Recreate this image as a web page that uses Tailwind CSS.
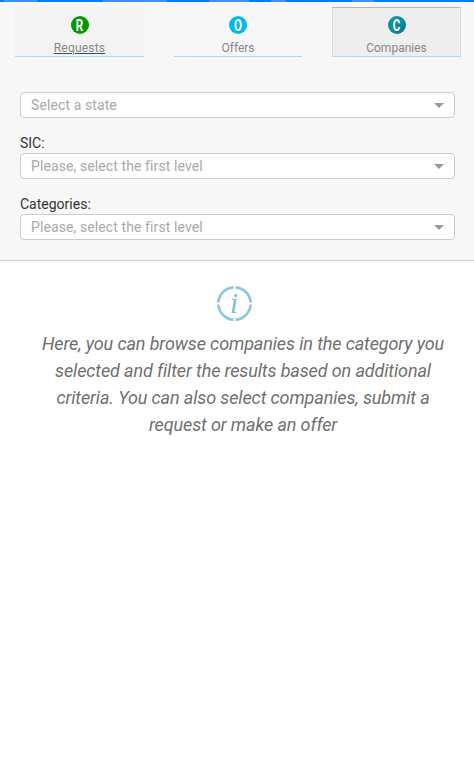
<!DOCTYPE html>
<html lang="en">
<head>
    <meta charset="UTF-8">
    <meta name="viewport" content="width=device-width, initial-scale=1.0">
    <title>Companies</title>
    <script src="https://cdn.jsdelivr.net/npm/@tailwindcss/browser@4"></script>
</head>
<body class="bg-white font-['Roboto',sans-serif] h-[759px] overflow-hidden">
    <!-- top loading bar -->
    <div class="h-[2px] bg-[#067bff] flex">
        <div class="w-[4px]"></div>
        <div class="w-[33px] bg-[#3f8ff5]"></div>
        <div class="w-[66px]"></div>
        <div class="w-[64px] bg-[#3f8ff5]"></div>
        <div class="w-[42px]"></div>
        <div class="w-[40px] bg-[#3f8ff5]"></div>
        <div class="w-[22px]"></div>
        <div class="w-[15px] bg-[#3f8ff5]"></div>
        <div class="w-[66px]"></div>
        <div class="w-[22px] bg-[#3f8ff5]"></div>
    </div>

    <div class="bg-[#f7f7f7] border-b border-[#cccccc] h-[259px]">
        <!-- tabs -->
        <div class="flex justify-between pl-[15px] pr-[13px] pt-[5px]">
            <a class="w-[129px] h-[50px] bg-[#f3f3f3] border-b border-[#9be2fb] flex flex-col items-center">
                <span class="mt-[9px] w-[18px] h-[18px] rounded-full bg-[#009a00] flex items-center justify-center text-white text-[17px] font-bold leading-none"><span class="inline-block scale-x-[0.68]">R</span></span>
                <span class="mt-[7px] text-[12px] tracking-[0.2px] leading-[14px] text-[#85878c] underline decoration-[#3b4a6b]">Requests</span>
            </a>
            <a class="w-[128px] h-[50px] border-b border-[#9be2fb] flex flex-col items-center">
                <span class="mt-[9px] w-[18px] h-[18px] rounded-full bg-[#00b8f0] flex items-center justify-center text-white text-[17px] font-bold leading-none"><span class="inline-block scale-x-[0.68]">O</span></span>
                <span class="mt-[7px] text-[12px] leading-[14px] text-[#85878c]">Offers</span>
            </a>
            <a class="w-[129px] h-[50px] bg-[#eeeeee] border border-[#dddddd] border-t-[#b5b5b5] border-b-[#9be2fb] flex flex-col items-center">
                <span class="mt-[8px] w-[18px] h-[18px] rounded-full bg-[linear-gradient(135deg,#0f9bab,#067a8c)] flex items-center justify-center text-white text-[17px] font-bold leading-none"><span class="inline-block scale-x-[0.68]">C</span></span>
                <span class="mt-[7px] text-[12px] leading-[14px] text-[#85878c]">Companies</span>
            </a>
        </div>

        <!-- filters -->
        <form class="px-[20px] pt-[35px] pr-[19px]">
            <div class="h-[26px] bg-white border border-[#cccccc] rounded-[4px] flex items-center justify-between pl-[10px] pr-[10px] text-[14px] tracking-[0.1px] text-[#a9a9a9]">
                <span>Select a state</span>
                <span class="w-0 h-0 border-x-[5px] border-x-transparent border-t-[5px] border-t-[#999999]"></span>
            </div>
            <label class="block mt-[16px] mb-[1px] text-[14px] leading-[18px] text-[#333333]">SIC:</label>
            <div class="h-[26px] bg-white border border-[#cccccc] rounded-[4px] flex items-center justify-between pl-[10px] pr-[10px] text-[14px] tracking-[0.1px] text-[#a9a9a9]">
                <span>Please, select the first level</span>
                <span class="w-0 h-0 border-x-[5px] border-x-transparent border-t-[5px] border-t-[#999999]"></span>
            </div>
            <label class="block mt-[16px] mb-[1px] text-[14px] leading-[18px] text-[#333333]">Categories:</label>
            <div class="h-[26px] bg-white border border-[#cccccc] rounded-[4px] flex items-center justify-between pl-[10px] pr-[10px] text-[14px] tracking-[0.1px] text-[#a9a9a9]">
                <span>Please, select the first level</span>
                <span class="w-0 h-0 border-x-[5px] border-x-transparent border-t-[5px] border-t-[#999999]"></span>
            </div>
        </form>
    </div>

    <!-- info message -->
    <div class="flex flex-col items-center pt-[25px]">
        <div class="relative w-[35px] h-[35px] mr-[6px]">
            <svg width="35" height="35" viewBox="0 0 36 36" fill="none" stroke="#8fc7dc" stroke-width="2.8">
                <path d="M17 1.4A16.6 16.6 0 0 0 1.4 17"/>
                <path d="M19 1.4A16.6 16.6 0 0 1 34.6 17"/>
                <path d="M1.4 19A16.6 16.6 0 0 0 17 34.6"/>
                <path d="M34.6 19A16.6 16.6 0 0 1 19 34.6"/>
            </svg>
            <span class="absolute inset-0 flex items-center justify-center font-['Liberation_Serif',serif] italic text-[29px] leading-none text-[#7dbcd5]">i</span>
        </div>
        <p class="mt-[9px] ml-[12px] w-[420px] text-center italic text-[18px] tracking-[-0.12px] leading-[27px] text-[#6f6f6f]">Here, you can browse companies in the category you selected and filter the results based on additional criteria. You can also select companies, submit a request or make an offer</p>
    </div>
</body>
</html>
